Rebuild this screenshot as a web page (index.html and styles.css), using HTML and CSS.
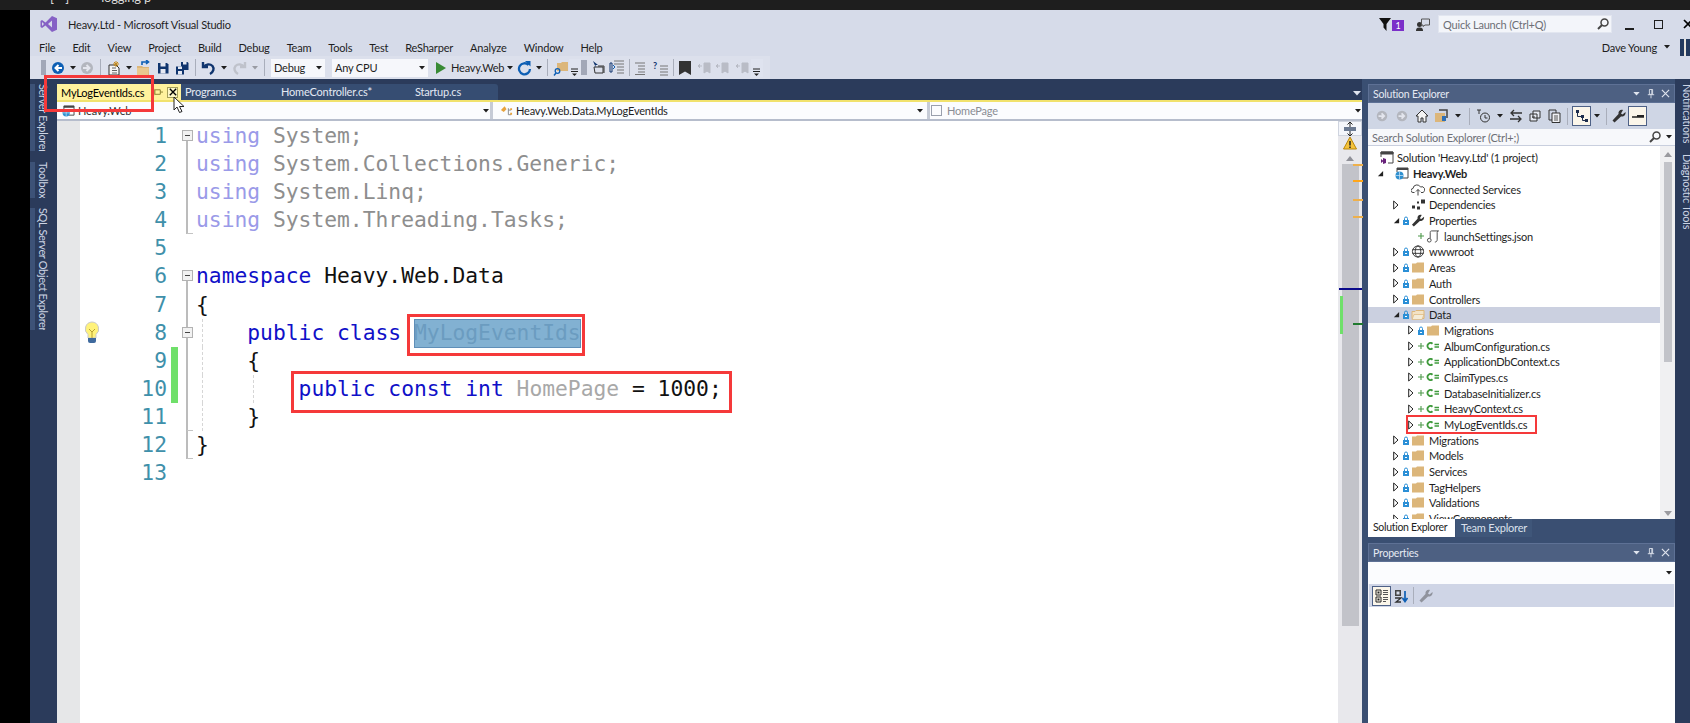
FILE: index.html
```html
<!DOCTYPE html>
<html lang="en">
<head>
<meta charset="utf-8">
<title>Heavy.Ltd - Microsoft Visual Studio</title>
<link rel="stylesheet" href="styles.css">
</head>
<body>
<svg class="defs" width="0" height="0">
  <symbol id="back" viewBox="0 0 16 16"><circle cx="8" cy="8" r="6" fill="#0e5fb4"/><path d="M12 8H6M8.5 5L5.5 8l3 3" fill="none" stroke="#fff" stroke-width="2"/></symbol>
  <symbol id="fwd" viewBox="0 0 16 16"><circle cx="8" cy="8" r="6" fill="#b3b6be"/><path d="M4 8h6M7.5 5l3 3-3 3" fill="none" stroke="#e4e6ee" stroke-width="2"/></symbol>
  <symbol id="caret" viewBox="0 0 6 4"><path d="M0 0h6L3 3.5z" fill="#1e1e1e"/></symbol>
  <symbol id="caretw" viewBox="0 0 8 5"><path d="M0 0h8L4 4.5z" fill="#dfe4ee"/></symbol>
  <symbol id="new" viewBox="0 0 16 16"><path d="M3 5h7l3 3v7H3z" fill="#f5f5f5" stroke="#333"/><path d="M6 8h4M6 10.5h5M6 13h5" stroke="#666"/><path d="M10 1v6M7 4h6M8 2l4 4M12 2L8 6" stroke="#c48a1c" stroke-width="1"/></symbol>
  <symbol id="open" viewBox="0 0 16 16"><path d="M1 6h5l1 1h6v8H1z" fill="#dcb67a"/><path d="M1 8h12l-1 7H1z" fill="#e9c88f"/><path d="M6 5V2H12M10 0l2.500 2-2.500 2" fill="none" stroke="#0e5fb4" stroke-width="1.600"/></symbol>
  <symbol id="save" viewBox="0 0 16 16"><path d="M3 3h9l1.500 1.500V13.500H3z" fill="#10356e"/><path d="M5.500 3h5v3.500h-5z" fill="#e6e9f2"/><path d="M5.500 9h5v4.500h-5z" fill="#e6e9f2"/></symbol>
  <symbol id="saveall" viewBox="0 0 16 16"><path d="M7 2h6.500l1 1v7H7z" fill="#10356e"/><path d="M9 2h3.500v2.500H9z" fill="#e6e9f2"/><path d="M2 6.500h7l1 1v7H2z" fill="#10356e"/><path d="M4 6.500h4v2.500H4zM4 11h4v3.500H4z" fill="#e6e9f2"/></symbol>
  <symbol id="undo" viewBox="0 0 16 16"><path d="M3 2v5h5M3.500 7C6 4 10 3.500 12.500 6c2 2.500 1 6-2.500 8" fill="none" stroke="#10356e" stroke-width="2.400"/></symbol>
  <symbol id="redo" viewBox="0 0 16 16"><path d="M13 2v5H8M12.500 7C10 4 6 3.500 3.500 6c-2 2.500-1 6 2.500 8" fill="none" stroke="#bfc2cb" stroke-width="2.400"/></symbol>
  <symbol id="play" viewBox="0 0 16 16"><path d="M4 2l10 6-10 6z" fill="#388a34"/></symbol>
  <symbol id="refresh" viewBox="0 0 16 16"><path d="M12.500 5A5.500 5.500 0 1 0 14 9" fill="none" stroke="#0e5fb4" stroke-width="2.300"/><path d="M9 1l5.500 0 0 5.500z" fill="#0e5fb4"/></symbol>
  <symbol id="find" viewBox="0 0 16 16"><path d="M4 3h4l1-1h6v9H4z" fill="#dcb67a"/><circle cx="4.500" cy="11" r="2.300" fill="none" stroke="#0e5fb4" stroke-width="1.300"/><path d="M3 13l-2 2.500" stroke="#0e5fb4" stroke-width="1.500"/></symbol>
  <symbol id="over" viewBox="0 0 8 8"><path d="M0 1h7M0 3.500h7" stroke="#222" stroke-width="1"/><path d="M1 5.500h5L3.500 8z" fill="#222"/></symbol>
  <symbol id="tbA" viewBox="0 0 16 16"><path d="M3 7h9v6H4zM7 6h6v7" fill="none" stroke="#333"/><path d="M2 1l5 4-2.500 0L5 8z" fill="#10356e"/></symbol>
  <symbol id="tbB" viewBox="0 0 16 16"><path d="M1 3h2v9H1z" fill="none" stroke="#10356e"/><path d="M5 1h10M5 4h10M8 7h7M8 10h7M8 13h7" stroke="#777" stroke-width="1.200"/><path d="M4 5l2 2-2 2" fill="none" stroke="#0e5fb4"/></symbol>
  <symbol id="tbC" viewBox="0 0 16 16"><path d="M2 3h10M5 6h7M5 9h7M5 12h7M2 14.500h10" stroke="#777" stroke-width="1.200"/></symbol>
  <symbol id="tbD" viewBox="0 0 16 16"><path d="M7 6h8M7 9h8M7 12h8M7 15h8" stroke="#777" stroke-width="1.200"/><text x="0" y="9" class="tq">?</text></symbol>
  <symbol id="bm" viewBox="0 0 16 16"><path d="M2 1h12v14l-6-3.500L2 15z" fill="#333"/></symbol>
  <symbol id="bmA" viewBox="0 0 16 16"><path d="M7 3v10l3-2 3 2V3zM5 6H1m2-2L1 6l2 2" fill="#b9bcc6" stroke="#b9bcc6"/></symbol>
  <symbol id="filter" viewBox="0 0 12 13"><path d="M0 0h12L7.500 6v7L4.500 9.500V6z" fill="#111"/></symbol>
  <symbol id="feedback" viewBox="0 0 14 13"><circle cx="3.500" cy="6.500" r="2.500" fill="#333"/><path d="M0 13c0-3 1.500-3.500 3.500-3.500S7 10 7 13z" fill="#333"/><path d="M5.500 1H13.500V7H9L7 8.500V7H5.500z" fill="none" stroke="#555"/></symbol>
  <symbol id="mag" viewBox="0 0 12 12"><circle cx="7.500" cy="4.500" r="3.500" fill="none" stroke="#444" stroke-width="1.500"/><path d="M5 7l-4 4" stroke="#444" stroke-width="2"/></symbol>
  <symbol id="logo" viewBox="0 0 18 18"><path d="M12 1l5 2.200v11.600L12 17 5.500 10.500 2 13l-1.500-1V6L2 5l3.500 2.500z" fill="#8661c5"/><path d="M12 5.500L8 9l4 3.500z" fill="#d6dbe9"/><path d="M2 7v4l2-2z" fill="#d6dbe9"/></symbol>
  <symbol id="pin" viewBox="0 0 10 12"><path d="M3 1h4v6H3zM1 7.500h8M5 8v4M6 1v6" fill="none" stroke="#dfe4ee" stroke-width="1.100"/></symbol>
  <symbol id="pindark" viewBox="0 0 10 10"><path d="M1 2h6v5H1zM7 4.500h3M0 1v7" fill="none" stroke="#8f8535" stroke-width="1.100"/></symbol>
  <symbol id="x" viewBox="0 0 10 10"><path d="M1 1l8 8M9 1L1 9" stroke="#dfe4ee" stroke-width="1.300"/></symbol>
  <symbol id="xdark" viewBox="0 0 10 10"><path d="M1 1l8 8M9 1L1 9" stroke="#000" stroke-width="1.700"/></symbol>
  <symbol id="proj" viewBox="0 0 14 13"><path d="M2 1h11v10H7" fill="none" stroke="#444"/><path d="M2 1h11v2H2z" fill="#444"/><path d="M2 1v4" stroke="#444"/><circle cx="4.500" cy="8.500" r="4" fill="#2f90cf"/><path d="M.5 8.500h8M4.500 4.500v8" stroke="#cfe7f7" stroke-width=".7"/></symbol>
  <symbol id="nsicon" viewBox="0 0 14 12"><path d="M1 5l4-4 2 3-3 3z" fill="#e8a33d"/><path d="M9 3v7h3M9 5h3" fill="none" stroke="#888" stroke-width="1"/><path d="M11 3h2v2h-2zM11 8h2v2h-2z" fill="#e8a33d"/></symbol>
  <symbol id="sln" viewBox="0 0 14 13"><path d="M1 1h12v11H8" fill="none" stroke="#444"/><path d="M1 1h12v2H1zM1 1v5" fill="#444" stroke="#444"/><path d="M1 8l2 1.500V7l3 1v4l-3 1v-2.500L1 12z" fill="#68217a"/></symbol>
  <symbol id="cloud" viewBox="0 0 14 12"><path d="M3.500 9H2a2 2 0 0 1 0-4 4 4 0 0 1 7.500-1.500A3 3 0 0 1 12 9h-2" fill="none" stroke="#444"/><path d="M7 6v6M5 8l2-2 2 2" fill="none" stroke="#444"/></symbol>
  <symbol id="deps" viewBox="0 0 14 12"><path d="M1 7h3v3H1zM6 3h2v2H6zM6 8h3v3H6zM10 1h4v4h-4z" fill="#333"/></symbol>
  <symbol id="wrench" viewBox="0 0 14 14"><path d="M13.500 3L10.500 5.500 9 4.500 11 1C8.500 0 6 2 6.500 5L0.500 11.500 2.500 13.500 9 7.500c3 .5 5-2 4.500-4.500z" fill="#333"/></symbol>
  <symbol id="json" viewBox="0 0 14 14"><path d="M4 9V2.500C4 1 5 1 6 1h7c-1 0-1.500 .5-1.500 1.500v8c0 1.500-1 2.500-2.500 2.500" fill="none" stroke="#444"/><circle cx="3" cy="11" r="2" fill="none" stroke="#444"/></symbol>
  <symbol id="globe" viewBox="0 0 14 14"><circle cx="7" cy="7" r="6" fill="none" stroke="#333"/><ellipse cx="7" cy="7" rx="3" ry="6" fill="none" stroke="#333"/><path d="M1 5h12M1 9h12" stroke="#333"/></symbol>
  <symbol id="folder" viewBox="0 0 14 12"><path d="M1 2h4l1-1h7v10H1z" fill="#dcb67a"/></symbol>
  <symbol id="folderopen" viewBox="0 0 14 12"><path d="M1 3h3l1-1h8v8H1z" fill="#f3e3c5" stroke="#dcb67a"/><path d="M1 11l2-5h10l-2 5z" fill="#f4ecd8" stroke="#dcb67a" stroke-width=".7"/></symbol>
  <symbol id="lock" viewBox="0 0 6 9"><path d="M1.500 4V2.500a1.500 1.500 0 0 1 3 0V4" fill="none" stroke="#2b8fd6"/><path d="M0 4h6v5H0z" fill="#2b8fd6"/><path d="M2 6h2v1H2z" fill="#fff"/></symbol>
  <symbol id="plus" viewBox="0 0 7 7"><path d="M3.500 0v7M0 3.500h7" stroke="#4f9a4c" stroke-width="1.300"/></symbol>
  <symbol id="csfile" viewBox="0 0 14 8"><path d="M6.500 1.700A3 3 0 1 0 6.500 6.300" fill="none" stroke="#3f9a3c" stroke-width="1.800"/><path d="M8.500 2.500h4.500M8.500 5h4.500" stroke="#3f9a3c" stroke-width="1.400"/></symbol>
  <symbol id="closed" viewBox="0 0 6 10"><path d="M.7 1l4.300 4-4.300 4z" fill="#fff" stroke="#222"/></symbol>
  <symbol id="opened" viewBox="0 0 8 8"><path d="M7 1v6H1z" fill="#222"/></symbol>
  <symbol id="home" viewBox="0 0 14 14"><path d="M7 1L1 7h2v6h3V9h2v4h3V7h2z" fill="#f3f3f3" stroke="#333"/></symbol>
  <symbol id="sync" viewBox="0 0 14 14"><path d="M1 4h10v9H1z" fill="#dcb67a"/><path d="M5 1h8v8" fill="none" stroke="#444" stroke-width="1.500"/><path d="M8 7v5h4V7z" fill="#2f6fb5"/></symbol>
  <symbol id="hist" viewBox="0 0 14 14"><circle cx="8" cy="8.500" r="4.500" fill="none" stroke="#333"/><path d="M8 6v3h2.500M0 1h4M2 1v4" fill="none" stroke="#333"/></symbol>
  <symbol id="arrows" viewBox="0 0 14 14"><path d="M13 4H3M5 1L2 4l3 3M1 10h10M9 7l3 3-3 3" fill="none" stroke="#333" stroke-width="1.300"/></symbol>
  <symbol id="coll" viewBox="0 0 14 14"><path d="M5 2h7v7H5zM2 5h7v7H2z" fill="#e6e9f2" stroke="#333"/><path d="M4 8h3" stroke="#333"/></symbol>
  <symbol id="copy" viewBox="0 0 14 14"><path d="M2 1h7v10H2z" fill="none" stroke="#333"/><path d="M5 4h8v9.500H5z" fill="#f0f1f5" stroke="#333"/><path d="M7 7h4M7 9h4M7 11h4" stroke="#555"/></symbol>
  <symbol id="active" viewBox="0 0 14 14"><path d="M1 1h3v3H1zM6 6h3v3H6zM10 10h3v3h-3z" fill="#1d2d4d"/><path d="M2.500 4v3.500H6M7.500 9v2.500H10" fill="none" stroke="#1d2d4d"/></symbol>
  <symbol id="dash" viewBox="0 0 14 14"><path d="M1 8h12" stroke="#222" stroke-width="1.500"/><path d="M6 6h7v2H6z" fill="#222"/></symbol>
  <symbol id="cat" viewBox="0 0 14 14"><path d="M1 1h5v5H1zM1 8h5v5H1z" fill="none" stroke="#222"/><path d="M2.500 2.500h2v2h-2zM2.500 9.500h2v2h-2z" fill="#222"/><path d="M8 1.500h5M8 3.500h5M8 5.500h5M8 8.500h5M8 10.500h5M8 12.500h3" stroke="#555"/></symbol>
  <symbol id="az" viewBox="0 0 14 14"><path d="M1 1h6v6H1z" fill="#444"/><path d="M2.500 2.500h3v3h-3z" fill="#d6dbe9"/><path d="M1 9h6l-5 4h5" fill="none" stroke="#333" stroke-width="1.300"/><path d="M11 2v10M8.500 9l2.500 3.500L13.500 9" fill="none" stroke="#0e5fb4" stroke-width="1.700"/></symbol>
  <symbol id="split" viewBox="0 0 14 14"><path d="M7 0v14M4.500 2.500L7 0l2.500 2.500M4.500 11.500L7 14l2.500-2.500" fill="none" stroke="#222"/><path d="M1 5h12v4H1z" fill="#6b7a92"/></symbol>
  <symbol id="warn" viewBox="0 0 14 14"><path d="M7 1l6.500 12H.5z" fill="#f5c33b" stroke="#b8860b"/><path d="M7 5v4.500M7 10.500v1.500" stroke="#222" stroke-width="1.500"/></symbol>
  <symbol id="bulb" viewBox="0 0 16 22"><path d="M8 1a7 7 0 0 0-4 12.500V17h8v-3.500A7 7 0 0 0 8 1z" fill="#fff27a" stroke="#c9c9c9"/><path d="M5 8l3 3 3-3M8 11v6" fill="none" stroke="#b8a030"/><path d="M4 17h8v3a2 2 0 0 1-2 2H6a2 2 0 0 1-2-2z" fill="#3f6a9e"/></symbol>
  <symbol id="cursor" viewBox="0 0 12 18"><path d="M1 1v13l3-3 2.500 5.500 2.500-1L6.500 10.500H11z" fill="#fff" stroke="#222"/></symbol>
</svg>

<div class="topstrip"><span class="peek">[ * ]</span><span class="peek">logging p</span></div>

<div class="page">
  <div class="blackbar"></div>
  <div class="ide">
    <header class="head">
      <div class="titlerow">
        <svg class="logo"><use href="#logo"/></svg>
        <span class="apptitle">Heavy.Ltd - Microsoft Visual Studio</span>
        <div class="titleright">
          <svg class="filter"><use href="#filter"/></svg>
          <span class="badge">1</span>
          <svg class="feedback"><use href="#feedback"/></svg>
          <div class="quick"><span>Quick Launch (Ctrl+Q)</span><svg class="mag"><use href="#mag"/></svg></div>
          <span class="winbtn min"></span>
          <span class="winbtn rest"></span>
          <svg class="clos"><use href="#xdark"/></svg>
        </div>
      </div>
      <div class="menurow">
        <nav class="menu">
          <span>File</span><span>Edit</span><span>View</span><span>Project</span><span>Build</span><span>Debug</span><span>Team</span><span>Tools</span><span>Test</span><span>ReSharper</span><span>Analyze</span><span>Window</span><span>Help</span>
        </nav>
        <div class="user"><span>Dave Young</span><svg class="cr"><use href="#caret"/></svg><span class="avatar"></span></div>
      </div>
      <div class="toolbar">
        <span class="grip g9"></span>
        <span class="ti w16"><svg><use href="#back"/></svg></span>
        <span class="ti w13"><svg class="cr"><use href="#caret"/></svg></span>
        <span class="ti w16"><svg><use href="#fwd"/></svg></span>
        <span class="ti w10"><i class="sep"></i></span>
        <span class="ti w18"><svg><use href="#new"/></svg></span>
        <span class="ti w12"><svg class="cr"><use href="#caret"/></svg></span>
        <span class="ti w18"><svg><use href="#open"/></svg></span>
        <span class="ti w20"><svg><use href="#save"/></svg></span>
        <span class="ti w18"><svg><use href="#saveall"/></svg></span>
        <span class="ti w9"><i class="sep"></i></span>
        <span class="ti w16"><svg><use href="#undo"/></svg></span>
        <span class="ti w16"><svg class="cr"><use href="#caret"/></svg></span>
        <span class="ti w16"><svg><use href="#redo"/></svg></span>
        <span class="ti w14"><svg class="cr cr-dim"><use href="#caret"/></svg></span>
        <span class="ti w4"><i class="sep"></i></span>
        <div class="combo debug"><span>Debug</span><svg class="cr"><use href="#caret"/></svg></div>
        <div class="combo cpu"><span>Any CPU</span><svg class="cr"><use href="#caret"/></svg></div>
        <span class="ti w4"></span>
        <span class="ti w16"><svg><use href="#play"/></svg></span>
        <span class="runlabel">Heavy.Web</span>
        <span class="ti w12"><svg class="cr"><use href="#caret"/></svg></span>
        <span class="ti w16"><svg><use href="#refresh"/></svg></span>
        <span class="ti w13"><svg class="cr"><use href="#caret"/></svg></span>
        <span class="ti w4"><i class="sep"></i></span>
        <span class="ti w4"></span>
        <span class="ti w16"><svg><use href="#find"/></svg></span>
        <span class="ti w12 over"><svg class="ov"><use href="#over"/></svg></span>
        <span class="grip g6"></span>
        <span class="ti w4"></span>
        <span class="ti w16"><svg><use href="#tbA"/></svg></span>
        <span class="ti w2"></span>
        <span class="ti w16"><svg><use href="#tbB"/></svg></span>
        <span class="ti w2"></span>
        <span class="ti w4"><i class="sep"></i></span>
        <span class="ti w2"></span>
        <span class="ti w16"><svg><use href="#tbC"/></svg></span>
        <span class="ti w4"></span>
        <span class="ti w16"><svg><use href="#tbD"/></svg></span>
        <span class="ti w2"></span>
        <span class="ti w4"><i class="sep"></i></span>
        <span class="ti w2"></span>
        <span class="ti w16"><svg><use href="#bm"/></svg></span>
        <span class="ti w4"></span>
        <span class="ti w16"><svg><use href="#bmA"/></svg></span>
        <span class="ti w2"></span>
        <span class="ti w16"><svg><use href="#bmA"/></svg></span>
        <span class="ti w4"></span>
        <span class="ti w16"><svg><use href="#bmA"/></svg></span>
        <span class="ti w12 over"><svg class="ov"><use href="#over"/></svg></span>
      </div>
    </header>

    <div class="work">
      <aside class="rail">
        <span class="railtab t1">Server Explorer</span>
        <span class="railtab t2">Toolbox</span>
        <span class="railtab t3">SQL Server Object Explorer</span>
      </aside>

      <main class="doc">
        <div class="tabs">
          <div class="tab active">
            <span class="tabname">MyLogEventIds.cs</span>
            <svg class="tabpin"><use href="#pindark"/></svg>
            <span class="tabx"><svg><use href="#xdark"/></svg></span>
          </div>
          <div class="tabgroup">
            <span class="tab t-prog">Program.cs</span>
            <span class="tab t-home">HomeController.cs*</span>
            <span class="tab t-start">Startup.cs</span>
          </div>
          <svg class="tabdrop"><use href="#caretw"/></svg>
        </div>
        <div class="nav">
          <div class="navc nav1"><svg class="navic"><use href="#proj"/></svg><span>Heavy.Web</span><svg class="cr"><use href="#caret"/></svg></div>
          <div class="navc nav2"><svg class="navic"><use href="#nsicon"/></svg><span>Heavy.Web.Data.MyLogEventIds</span><svg class="cr"><use href="#caret"/></svg></div>
          <div class="navc nav3"><span class="navbox"></span><span class="dim">HomePage</span><svg class="cr"><use href="#caret"/></svg></div>
        </div>
        <div class="editor">
          <div class="gutter"></div>
          <div class="lines">
            <div class="line"><span class="bulbcol"></span><span class="num">1</span><span class="chg"></span><span class="fold down"><i></i></span><code><span class="u">using</span> <span class="g">System;</span></code></div>
            <div class="line"><span class="bulbcol"></span><span class="num">2</span><span class="chg"></span><span class="fold thru"></span><code><span class="u">using</span> <span class="g">System.Collections.Generic;</span></code></div>
            <div class="line"><span class="bulbcol"></span><span class="num">3</span><span class="chg"></span><span class="fold thru"></span><code><span class="u">using</span> <span class="g">System.Linq;</span></code></div>
            <div class="line"><span class="bulbcol"></span><span class="num">4</span><span class="chg"></span><span class="fold thru end"></span><code><span class="u">using</span> <span class="g">System.Threading.Tasks;</span></code></div>
            <div class="line"><span class="bulbcol"></span><span class="num">5</span><span class="chg"></span><span class="fold"></span><code></code></div>
            <div class="line"><span class="bulbcol"></span><span class="num">6</span><span class="chg"></span><span class="fold down"><i></i></span><code><span class="k">namespace</span> Heavy.Web.Data</code></div>
            <div class="line"><span class="bulbcol"></span><span class="num">7</span><span class="chg"></span><span class="fold thru"></span><code>{</code></div>
            <div class="line"><span class="bulbcol"><svg class="bulb"><use href="#bulb"/></svg></span><span class="num">8</span><span class="chg"></span><span class="fold thru"><i></i></span><code class="guided"><span class="ind">    </span><span class="k">public class</span> <span class="sel">MyLogEventIds</span></code></div>
            <div class="line"><span class="bulbcol"></span><span class="num">9</span><span class="chg on"></span><span class="fold thru"></span><code class="guided">    {</code></div>
            <div class="line"><span class="bulbcol"></span><span class="num">10</span><span class="chg on"></span><span class="fold thru"></span><code class="guided guided2">        <span class="k">public const int</span> <span class="h">HomePage</span> = 1000;</code></div>
            <div class="line"><span class="bulbcol"></span><span class="num">11</span><span class="chg"></span><span class="fold thru end"></span><code class="guided">    }</code></div>
            <div class="line"><span class="bulbcol"></span><span class="num">12</span><span class="chg"></span><span class="fold thru end"></span><code>}</code></div>
            <div class="line"><span class="bulbcol"></span><span class="num">13</span><span class="chg"></span><span class="fold"></span><code></code></div>
          </div>
          <div class="vscroll">
            <span class="splitbtn"><svg><use href="#split"/></svg></span>
            <span class="warnbtn"><svg><use href="#warn"/></svg></span>
            <span class="uparrow"></span>
            <div class="thumbtrack">
              <i class="mk o1"></i><i class="mk o2"></i><i class="mk o3"></i><i class="mk o4"></i>
              <i class="caretline"></i><i class="chgbar"></i><i class="mk gr"></i>
            </div>
          </div>
        </div>
      </main>

      <section class="dock">
        <div class="ptitle"><span>Solution Explorer</span><div class="pbtns"><svg class="cw"><use href="#caretw"/></svg><svg class="pp"><use href="#pin"/></svg><svg class="px"><use href="#x"/></svg></div></div>
        <div class="setools">
          <span class="si s20 first"><svg><use href="#fwd"/></svg></span>
          <span class="si s20"><svg><use href="#fwd"/></svg></span>
          <span class="si s19"><svg><use href="#home"/></svg></span>
          <span class="si s19"><svg><use href="#sync"/></svg></span>
          <span class="si s15"><svg class="cr"><use href="#caret"/></svg></span>
          <span class="si s9"><i class="sep"></i></span>
          <span class="si s20"><svg><use href="#hist"/></svg></span>
          <span class="si s12"><svg class="cr"><use href="#caret"/></svg></span>
          <span class="si s19"><svg><use href="#arrows"/></svg></span>
          <span class="si s19"><svg><use href="#coll"/></svg></span>
          <span class="si s19"><svg><use href="#copy"/></svg></span>
          <span class="si s9"><i class="sep"></i></span>
          <span class="si s19 pressed"><svg><use href="#active"/></svg></span>
          <span class="si s12"><svg class="cr"><use href="#caret"/></svg></span>
          <span class="si s6"><i class="sep"></i></span>
          <span class="si s19"><svg><use href="#wrench"/></svg></span>
          <span class="si s19 pressed"><svg><use href="#dash"/></svg></span>
        </div>
        <div class="sesearch"><span>Search Solution Explorer (Ctrl+;)</span><svg class="mag"><use href="#mag"/></svg><svg class="cr"><use href="#caret"/></svg></div>
        <div class="treewrap">
          <div class="tree">
            <div class="row sol"><svg class="ic"><use href="#sln"/></svg><span>Solution 'Heavy.Ltd' (1 project)</span></div>
            <div class="row l1"><span class="ar"><svg class="op"><use href="#opened"/></svg></span><span class="st"></span><svg class="ic"><use href="#proj"/></svg><b>Heavy.Web</b></div>
            <div class="row l2"><span class="ar"></span><span class="st"></span><svg class="ic"><use href="#cloud"/></svg><span>Connected Services</span></div>
            <div class="row l2"><span class="ar"><svg class="cl"><use href="#closed"/></svg></span><span class="st"></span><svg class="ic"><use href="#deps"/></svg><span>Dependencies</span></div>
            <div class="row l2"><span class="ar"><svg class="op"><use href="#opened"/></svg></span><span class="st"><svg class="lk"><use href="#lock"/></svg></span><svg class="ic"><use href="#wrench"/></svg><span>Properties</span></div>
            <div class="row l3"><span class="ar"></span><span class="st"><svg class="pl"><use href="#plus"/></svg></span><svg class="ic"><use href="#json"/></svg><span>launchSettings.json</span></div>
            <div class="row l2"><span class="ar"><svg class="cl"><use href="#closed"/></svg></span><span class="st"><svg class="lk"><use href="#lock"/></svg></span><svg class="ic"><use href="#globe"/></svg><span>wwwroot</span></div>
            <div class="row l2"><span class="ar"><svg class="cl"><use href="#closed"/></svg></span><span class="st"><svg class="lk"><use href="#lock"/></svg></span><svg class="ic"><use href="#folder"/></svg><span>Areas</span></div>
            <div class="row l2"><span class="ar"><svg class="cl"><use href="#closed"/></svg></span><span class="st"><svg class="lk"><use href="#lock"/></svg></span><svg class="ic"><use href="#folder"/></svg><span>Auth</span></div>
            <div class="row l2"><span class="ar"><svg class="cl"><use href="#closed"/></svg></span><span class="st"><svg class="lk"><use href="#lock"/></svg></span><svg class="ic"><use href="#folder"/></svg><span>Controllers</span></div>
            <div class="row l2 selrow"><span class="ar"><svg class="op"><use href="#opened"/></svg></span><span class="st"><svg class="lk"><use href="#lock"/></svg></span><svg class="ic"><use href="#folderopen"/></svg><span>Data</span></div>
            <div class="row l3"><span class="ar"><svg class="cl"><use href="#closed"/></svg></span><span class="st"><svg class="lk"><use href="#lock"/></svg></span><svg class="ic"><use href="#folder"/></svg><span>Migrations</span></div>
            <div class="row l3"><span class="ar"><svg class="cl"><use href="#closed"/></svg></span><span class="st"><svg class="pl"><use href="#plus"/></svg></span><svg class="cs"><use href="#csfile"/></svg><span>AlbumConfiguration.cs</span></div>
            <div class="row l3"><span class="ar"><svg class="cl"><use href="#closed"/></svg></span><span class="st"><svg class="pl"><use href="#plus"/></svg></span><svg class="cs"><use href="#csfile"/></svg><span>ApplicationDbContext.cs</span></div>
            <div class="row l3"><span class="ar"><svg class="cl"><use href="#closed"/></svg></span><span class="st"><svg class="pl"><use href="#plus"/></svg></span><svg class="cs"><use href="#csfile"/></svg><span>ClaimTypes.cs</span></div>
            <div class="row l3"><span class="ar"><svg class="cl"><use href="#closed"/></svg></span><span class="st"><svg class="pl"><use href="#plus"/></svg></span><svg class="cs"><use href="#csfile"/></svg><span>DatabaseInitializer.cs</span></div>
            <div class="row l3"><span class="ar"><svg class="cl"><use href="#closed"/></svg></span><span class="st"><svg class="pl"><use href="#plus"/></svg></span><svg class="cs"><use href="#csfile"/></svg><span>HeavyContext.cs</span></div>
            <div class="row l3"><span class="ar"><svg class="cl"><use href="#closed"/></svg></span><span class="st"><svg class="pl"><use href="#plus"/></svg></span><svg class="cs"><use href="#csfile"/></svg><span>MyLogEventIds.cs</span></div>
            <div class="row l2"><span class="ar"><svg class="cl"><use href="#closed"/></svg></span><span class="st"><svg class="lk"><use href="#lock"/></svg></span><svg class="ic"><use href="#folder"/></svg><span>Migrations</span></div>
            <div class="row l2"><span class="ar"><svg class="cl"><use href="#closed"/></svg></span><span class="st"><svg class="lk"><use href="#lock"/></svg></span><svg class="ic"><use href="#folder"/></svg><span>Models</span></div>
            <div class="row l2"><span class="ar"><svg class="cl"><use href="#closed"/></svg></span><span class="st"><svg class="lk"><use href="#lock"/></svg></span><svg class="ic"><use href="#folder"/></svg><span>Services</span></div>
            <div class="row l2"><span class="ar"><svg class="cl"><use href="#closed"/></svg></span><span class="st"><svg class="lk"><use href="#lock"/></svg></span><svg class="ic"><use href="#folder"/></svg><span>TagHelpers</span></div>
            <div class="row l2"><span class="ar"><svg class="cl"><use href="#closed"/></svg></span><span class="st"><svg class="lk"><use href="#lock"/></svg></span><svg class="ic"><use href="#folder"/></svg><span>Validations</span></div>
            <div class="row l2"><span class="ar"><svg class="cl"><use href="#closed"/></svg></span><span class="st"><svg class="lk"><use href="#lock"/></svg></span><svg class="ic"><use href="#folder"/></svg><span>ViewComponents</span></div>
          </div>
          <div class="treescroll"><span class="tup"></span><div class="tthumb"></div><span class="tdown"></span></div>
        </div>
        <div class="dtabs"><span class="dtab on">Solution Explorer</span><span class="dtab">Team Explorer</span></div>
        <div class="ptitle props"><span>Properties</span><div class="pbtns"><svg class="cw"><use href="#caretw"/></svg><svg class="pp"><use href="#pin"/></svg><svg class="px"><use href="#x"/></svg></div></div>
        <div class="propcombo"><svg class="cr"><use href="#caret"/></svg></div>
        <div class="proptools">
          <span class="si s19 pressed"><svg><use href="#cat"/></svg></span>
          <span class="si s19"><svg><use href="#az"/></svg></span>
          <span class="si s6"><i class="sep"></i></span>
          <span class="si s19 faded"><svg><use href="#wrench"/></svg></span>
        </div>
        <div class="propbody"></div>
      </section>

      <aside class="rrail">
        <span class="rtext r1">Notifications</span>
        <span class="rtext r2">Diagnostic Tools</span>
      </aside>
    </div>
  </div>

  <span class="mark m-tab"></span>
  <span class="mark m-class"></span>
  <span class="mark m-const"></span>
  <span class="mark m-file"></span>
  <svg class="pointer"><use href="#cursor"/></svg>
</div>
</body>
</html>
```

FILE: styles.css
```css
* { box-sizing: border-box; }
html, body { margin: 0; height: 100%; overflow: hidden; }
body { background: #000; font: 11px Lato, "Noto Sans", sans-serif; letter-spacing: -.2px; color: #1e1e1e; }
.defs { position: absolute; }
.tq { font: bold 9px Lato, sans-serif; fill: #10356e; }
svg { display: block; }
svg.cr { width: 6px; height: 4px; flex: none; }
.cr-dim { opacity: .35; }

.topstrip { height: 10px; background: #1e1e1e; overflow: hidden; color: #d8d8d8; font-size: 13px; line-height: 13px; padding-left: 50px; display: flex; gap: 32px; }
.peek { display: block; margin-top: -9px; white-space: nowrap; }

.page { position: relative; display: flex; height: 713px; }
.blackbar { width: 30px; background: #000; flex: none; }
.ide { flex: 1; display: flex; flex-direction: column; min-width: 0; }

/* Header */
.head { height: 69px; background: #d6dbe9; flex: none; display: flex; flex-direction: column; }
.titlerow { height: 28px; display: flex; align-items: center; padding-left: 10px; }
.logo { width: 18px; height: 18px; }
.apptitle { margin-left: 10px; }
.titleright { margin-left: auto; display: flex; align-items: center; height: 28px; }
.filter { width: 12px; height: 13px; }
.badge { width: 12px; height: 11px; margin: 3px 0 0 1px; background: #7b2fc9; color: #fff; font-size: 9px; line-height: 11px; text-align: center; }
.feedback { width: 14px; height: 13px; margin-left: 12px; }
.quick { width: 174px; height: 18px; margin-left: 8px; background: #f3f5fa; border: 1px solid #e2e6f0; display: flex; align-items: center; justify-content: space-between; padding: 0 2px 0 4px; color: #6d6f76; }
.mag { width: 12px; height: 12px; flex: none; }
.winbtn { width: 9px; height: 9px; display: block; }
.min { margin-left: 13px; border-bottom: 2px solid #1e1e1e; height: 7px; margin-top: 4px; }
.rest { margin-left: 20px; border: 1.500px solid #1e1e1e; }
.clos { width: 10px; height: 10px; margin: 0 -3px 0 20px; flex: none; }

.menurow { height: 18px; display: flex; align-items: center; justify-content: space-between; padding-left: 9px; }
.menu { display: flex; gap: 17px; }
.user { display: flex; align-items: center; gap: 7px; }
.avatar { width: 10px; height: 17px; margin-left: 3px; background: linear-gradient(90deg, #243a5e 40%, #e7e3da 40%, #e7e3da 60%, #243a5e 60%); }

.toolbar { height: 23px; display: flex; align-items: center; padding-left: 11px; background: linear-gradient(90deg, #dce0ec 740px, #d6dbe9 740px); }
.grip { height: 15px; flex: none; background-image: radial-gradient(#9da3b3 .7px, transparent .8px); background-size: 2px 2px; background-repeat: repeat; }
.g9 { width: 9px; background-clip: content-box; padding-right: 4px; }
.g6 { width: 6px; }
.ti { display: flex; align-items: center; justify-content: center; flex: none; height: 18px; }
.ti > svg { width: 16px; height: 16px; }
.ti > svg.cr { width: 6px; height: 4px; }
.ti > svg.ov { width: 8px; height: 8px; margin-top: 8px; }
.over { background: #dfe3ef; }
.w2 { width: 2px; } .w4 { width: 4px; } .w9 { width: 9px; } .w10 { width: 10px; } .w12 { width: 12px; } .w13 { width: 13px; } .w14 { width: 14px; } .w16 { width: 16px; } .w18 { width: 18px; } .w20 { width: 20px; }
.sep { display: block; width: 1px; height: 17px; background: #a9aebb; flex: none; }
.combo { height: 18px; background: #f6f7fb; display: flex; align-items: center; justify-content: space-between; padding: 0 3px 0 3px; flex: none; }
.debug { width: 54px; margin-left: 5px; }
.cpu { width: 96px; margin-left: 7px; }
.runlabel { margin-left: 3px; width: 53px; flex: none; white-space: nowrap; }

/* Workspace */
.work { flex: 1; display: flex; min-height: 0; background: #2b3b5b; }
.rail { width: 27px; flex: none; display: flex; flex-direction: column; padding-top: 5px; }
.railtab { writing-mode: vertical-rl; color: #ccd4e4; line-height: 13px; width: 27px; padding-right: 7px; white-space: nowrap; background: linear-gradient(90deg, #3d5277 5px, transparent 5px); overflow: hidden; }
.t1 { height: 67px; letter-spacing: -.35px; }
.t2 { height: 36px; margin-top: 11px; }
.t3 { height: 122px; margin-top: 10px; letter-spacing: -.35px; }

.doc { width: 1305px; flex: none; display: flex; flex-direction: column; min-height: 0; }
.tabs { height: 23px; padding-top: 5px; border-bottom: 2px solid #f1e26d; display: flex; position: relative; }
.tab.active { width: 124px; flex: none; height: 16px; background: #fff29d; display: flex; align-items: center; color: #000; padding-left: 4px; }
.tabname { width: 91px; white-space: nowrap; }
.tabpin { width: 9px; height: 9px; margin-left: 2px; }
.tabx { width: 11px; height: 11px; margin-left: 4px; background: #fdf7c6; border: 1px solid #a5a05a; display: flex; align-items: center; justify-content: center; }
.tabx svg { width: 8px; height: 8px; }
.tabgroup { width: 317px; height: 16px; background: #364d72; border-radius: 0 3px 0 0; display: flex; color: #e4e9f3; line-height: 16px; }
.tabgroup .tab { display: block; white-space: nowrap; }
.t-prog { width: 100px; padding-left: 4px; }
.t-home { width: 134px; }
.t-start { width: 70px; }
.tabdrop { width: 8px; height: 5px; position: absolute; right: 1px; top: 12px; }

.nav { height: 19px; background: #fbfcfe; border-bottom: 2px solid #b6bdcc; display: flex; flex: none; padding-left: 1px; }
.navc { display: flex; align-items: center; height: 17px; flex: none; }
.navc span { white-space: nowrap; }
.navc svg.cr { margin-left: auto; margin-right: 1px; }
.navic { width: 13px; height: 12px; margin-right: 3px; flex: none; }
.nav1 { width: 435px; padding-left: 4px; border-right: 3px solid #c6cbd6; color: #333; }
.nav2 { width: 432px; margin-left: 5px; padding-left: 2px; padding-right: 3px; border-right: 3px solid #c6cbd6; }
.nav3 { flex: 1; padding-left: 1px; }
.navbox { width: 11px; height: 11px; border: 1px solid #9aa0ad; margin-right: 5px; }
.dim { color: #8a8d94; }

/* Editor */
.editor { flex: 1; display: flex; background: #fff; min-height: 0; }
.gutter { width: 23px; background: #e6e7e8; flex: none; }
.lines { flex: 1; padding-top: 1px; font: 21.3px/28.1px "DejaVu Sans Mono", "Liberation Mono", monospace; letter-spacing: 0; color: #111; }
.line { height: 28.1px; display: flex; }
.bulbcol { width: 25px; flex: none; position: relative; }
.bulb { width: 16px; height: 22px; margin: 2px 0 0 4px; }
.num { width: 62px; text-align: right; color: #3f90aa; flex: none; }
.chg { width: 7px; margin-left: 4px; flex: none; }
.chg.on { background: #6fe06a; }
.fold { width: 11px; margin-left: 4px; flex: none; position: relative; }
.fold.thru::before, .fold.down::before { content: ""; position: absolute; left: 4px; top: 0; bottom: 0; width: 2px; background: #bcbcbc; }
.fold.down::before { top: 19px; }
.fold.end::after { content: ""; position: absolute; left: 5px; right: 0; bottom: 0; height: 1.500px; background: #c4c4c4; }
.fold i { position: absolute; left: 0; top: 8px; width: 11px; height: 11px; border: 1px solid #b2b2b2; background: linear-gradient(#444, #444) center / 5px 1px no-repeat #f2f2f2; }
code { font: inherit; white-space: pre; margin-left: 3px; position: relative; display: block; flex: 1; }
.u { color: #9a9ae8; }
.g { color: #8e8e8e; }
.k { color: #1010c8; }
.h { color: #a8a8a8; }
.sel { background: #82b1d2; color: #6b9cc0; outline: 1px solid #5f8fb8; outline-offset: -1px; display: inline-block; height: 29px; }
.guided::before { content: ""; position: absolute; left: 6px; top: 0; bottom: 0; border-left: 1px dashed #d6d6d6; }
.guided2::after { content: ""; position: absolute; left: 57px; top: 0; bottom: 0; border-left: 1px dashed #d6d6d6; }

.vscroll { width: 24px; flex: none; background: #e8e8ec; display: flex; flex-direction: column; align-items: center; position: relative; }
.splitbtn { width: 24px; height: 15px; background: #f4f6fb; border: 1px solid #cfd4df; display: flex; align-items: center; justify-content: center; }
.splitbtn svg, .warnbtn svg { width: 14px; height: 14px; }
.warnbtn { height: 15px; display: block; }
.uparrow { width: 0; height: 0; border: 4px solid transparent; border-top: 0; border-bottom: 5px solid #8f9098; margin-top: 5px; }
.thumbtrack { width: 17px; height: 462px; margin-top: 3px; background: #c2c3c9; position: relative; }
.mk { position: absolute; left: 11px; width: 10px; height: 2px; }
.o1 { top: 0; background: #eeb04b; }
.o2 { top: 16px; background: #ffa61a; }
.o3 { top: 35px; background: #eeb04b; }
.o4 { top: 52px; background: #eeb04b; }
.caretline { position: absolute; left: -3px; width: 23px; top: 124px; height: 2px; background: #0a0a8a; }
.chgbar { position: absolute; left: -2px; width: 3px; top: 132px; height: 38px; background: #6fe06a; }
.gr { top: 159px; background: #1f7a2f; }

/* Dock */
.dock { width: 313px; flex: none; padding: 5px 0 0 6px; background: #3a4f72; display: flex; flex-direction: column; min-height: 0; }
.ptitle { height: 19px; background: #4d6082; border: 1px solid #5e7195; color: #e6eaf3; display: flex; align-items: center; justify-content: space-between; padding: 0 4px; flex: none; font-size: 10.5px; letter-spacing: -.2px; }
.pbtns { display: flex; align-items: center; }
.cw { width: 7px; height: 4px; }
.pp { width: 8px; height: 11px; margin-left: 7px; }
.px { width: 9px; height: 9px; margin-left: 6px; }
.setools { height: 26px; background: #cfd6e5; display: flex; align-items: center; flex: none; padding-left: 4px; }
.si { display: flex; align-items: center; justify-content: center; height: 20px; flex: none; }
.si > svg { width: 14px; height: 14px; }
.si > svg.cr { width: 6px; height: 4px; }
.first { margin-left: 0; }
.s6 { width: 6px; } .s9 { width: 9px; } .s12 { width: 12px; } .s15 { width: 15px; } .s19 { width: 19px; } .s20 { width: 20px; }
.pressed { background: #fbf6ea; border: 1px solid #4e6186; }
.faded { opacity: .4; }
.sesearch { height: 17px; background: #f7f8fb; display: flex; align-items: center; padding: 0 3px 0 4px; color: #6d6f76; flex: none; border-bottom: 1px solid #c9cfde; }
.sesearch span { margin-right: auto; }
.sesearch svg.cr { margin-left: 5px; }
.treewrap { flex: none; height: 373px; background: #fff; display: flex; overflow: hidden; }
.tree { flex: 1; padding-top: 4px; min-width: 0; }
.row { height: 15.7px; display: flex; align-items: center; white-space: nowrap; }
.sol { padding-left: 12px; }
.sol .ic { margin-right: 3px; }
.l1 { padding-left: 7px; }
.l2 { padding-left: 23px; }
.l3 { padding-left: 38px; }
.ar { width: 10px; flex: none; display: flex; justify-content: center; }
.cl { width: 6px; height: 10px; }
.op { width: 7px; height: 7px; }
.st { width: 10px; flex: none; display: flex; justify-content: center; }
.lk { width: 6px; height: 9px; }
.pl { width: 6px; height: 6px; }
.ic { width: 14px; height: 13px; flex: none; margin-right: 4px; }
.cs { width: 14px; height: 8px; flex: none; margin-right: 4px; }
.selrow { background: #cbd0e0; }
.treescroll { width: 15px; flex: none; background: #f0f0f2; display: flex; flex-direction: column; align-items: center; padding-top: 6px; }
.tup { width: 0; height: 0; border: 4px solid transparent; border-top: 0; border-bottom: 5px solid #9a9a9f; }
.tthumb { width: 8px; height: 200px; margin-top: 5px; background: #c2c3c9; }
.tdown { width: 0; height: 0; border: 4px solid transparent; border-bottom: 0; border-top: 5px solid #9a9a9f; margin-top: auto; margin-bottom: 3px; }
.dtabs { height: 18px; display: flex; flex: none; }
.dtab { padding: 0 5px; line-height: 17px; color: #dbe1ec; background: #3f5679; }
.dtab.on { background: #fff; color: #1e1e1e; width: 87px; padding-left: 5px; white-space: nowrap; margin-right: 1px; font-size: 10.5px; letter-spacing: -.3px; }
.props { margin-top: 6px; }
.propcombo { height: 22px; background: #fbfcfe; display: flex; align-items: center; justify-content: flex-end; padding-right: 3px; flex: none; }
.proptools { height: 23px; background: #cfd5e6; display: flex; align-items: center; padding-left: 3px; flex: none; border: 1px solid #f4f5fa; border-width: 0 1px; }
.propbody { flex: 1; background: #fff; }

.rrail { width: 15px; flex: none; display: flex; flex-direction: column; padding-top: 5px; overflow: hidden; }
.rtext { writing-mode: vertical-rl; color: #ccd4e4; line-height: 13px; margin-right: -4px; white-space: nowrap; }
.r1 { height: 70px; }

/* Annotations */
.mark { position: absolute; border: 3px solid #f5393a; }
.m-tab { left: 44px; top: 65px; width: 110px; height: 37px; }
.m-class { left: 407px; top: 304px; width: 178px; height: 42px; }
.m-const { left: 291px; top: 361px; width: 441px; height: 42px; }
.m-file { left: 1406px; top: 405px; width: 131px; height: 19px; border-width: 2px; }
.pointer { position: absolute; left: 173px; top: 86px; width: 12px; height: 18px; }
```
